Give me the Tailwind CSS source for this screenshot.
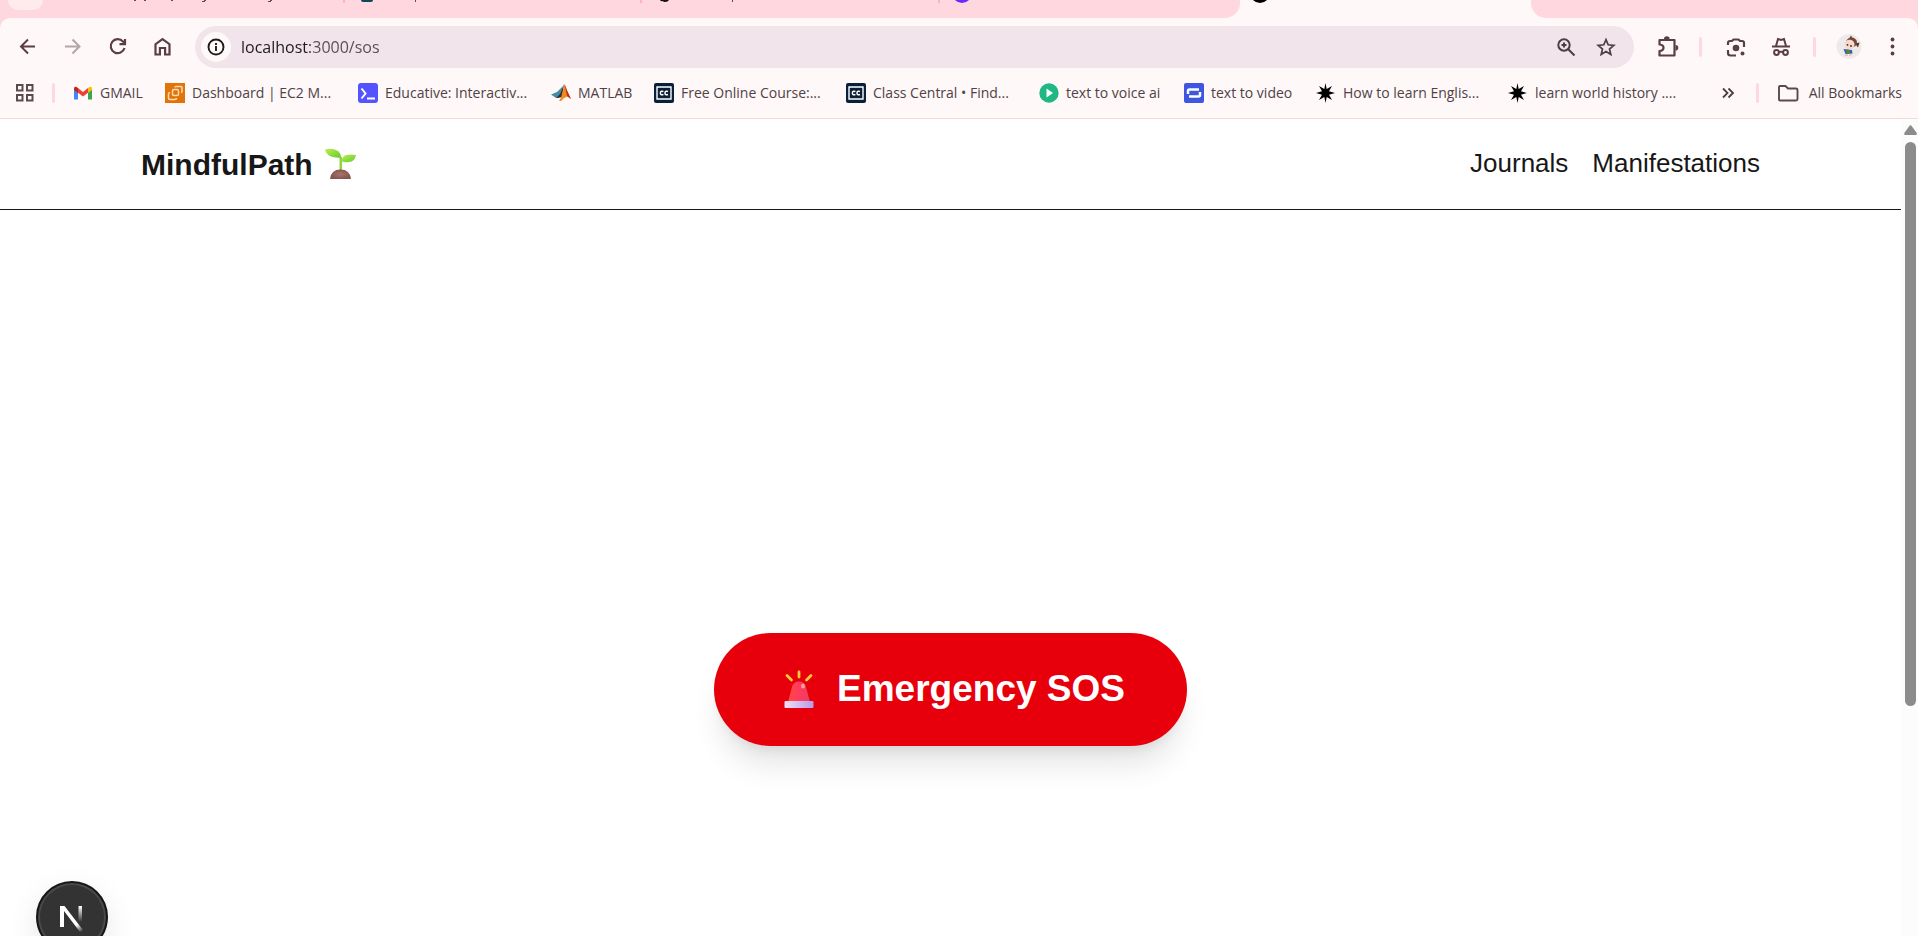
<!DOCTYPE html>
<html lang="en">
<head>
  <meta charset="UTF-8"/>
  <meta name="viewport" content="width=device-width, initial-scale=1.0"/>
  <title>MindfulPath</title>
  <script src="https://cdn.jsdelivr.net/npm/@tailwindcss/browser@4"></script>
</head>
<body class="h-screen flex flex-col overflow-hidden bg-white font-['Liberation_Sans',sans-serif] text-[#171717]">

  <!-- Browser chrome -->
  <header class="shrink-0 bg-[#ffd7df] font-['Open_Sans',sans-serif] text-[#4f4246]">

    <!-- Tab strip, only its lower edge is on screen -->
    <div class="flex h-[18px] bg-[#fff8f8]">
      <div class="flex w-[1240px] shrink-0 rounded-br-[15px] bg-[#ffd7df] pl-2">
        <div class="h-[10px] w-[35px] rounded-b-[12px] bg-[#ffebee]"></div>
        <div class="flex h-[3px] w-[300px] justify-end">
          <svg class="h-[3px] w-[209px]" viewBox="0 0 209 3" fill="#6b4a54">
            <path d="M0 0h2v1h-2zM10 0h2v1h-2zM37 0h2v1h-2zM68 1h2v-1h2v1h-1v1h-3zM134 1h2v-1h2v1h-1v1h-3z"/>
          </svg>
        </div>
        <div class="flex h-[3px] w-[297px] border-l-2 border-[#ffb1c3] pl-4">
          <div class="h-[2px] w-3 rounded-b-[2px] bg-[#0f4658]"></div>
          <div class="ml-[42px] h-[2px] w-px bg-[#6b4a54]"></div>
        </div>
        <div class="flex h-[3px] w-[298px] border-l-2 border-[#ffb1c3] pl-4">
          <svg class="h-[3px] w-3" viewBox="0 0 12 3" fill="#111"><path d="M2 0h9q-1 2-4 2-2 0-2-1-2 1-3-1z"/></svg>
          <div class="ml-[62px] h-[2px] w-px bg-[#6b4a54]"></div>
        </div>
        <div class="h-[3px] border-l-2 border-[#ffb1c3] pl-3">
          <svg class="h-[3px] w-5" viewBox="0 17 20 3" fill="#6a2bff"><circle cx="10" cy="10" r="10"/></svg>
        </div>
      </div>
      <div class="w-[291px] shrink-0 pl-[10px]">
        <svg class="h-[3px] w-5" viewBox="0 17 20 3"><circle cx="10" cy="10" r="10"/></svg>
      </div>
      <div class="flex-1 rounded-bl-[15px] bg-[#ffd7df]"></div>
    </div>

    <!-- Toolbar -->
    <div class="flex h-[58px] items-center rounded-t-[10px] bg-[#fff8f8] pr-3 pl-[15px] text-[#5a3d45]">
      <div class="flex items-center gap-[19px]">
        <button aria-label="Back" class="size-[26px]">
          <svg viewBox="0 0 26 26" fill="none" stroke="currentColor" stroke-width="2"><path d="M20 12.500H7M13 5.500l-7 7 7 7"/></svg>
        </button>
        <button aria-label="Forward" class="size-[26px] text-[#b3a5a8]">
          <svg viewBox="0 0 26 26" fill="none" stroke="currentColor" stroke-width="2"><path d="M5 12.500h14M12.500 5.500l7 7-7 7"/></svg>
        </button>
        <button aria-label="Reload" class="size-[26px]">
          <svg viewBox="0 0 26 26" fill="none" stroke="currentColor" stroke-width="2.200"><path d="M19.500 14A7 7 0 1 1 18 7.500l1.500 1.500M20 5v5.200h-5.500"/></svg>
        </button>
        <button aria-label="Home" class="size-[26px]">
          <svg viewBox="0 0 26 26" fill="none" stroke="currentColor" stroke-width="2.200"><path d="M5.500 20.500V10.200L12.500 5l7 5.200v10.300h-4.400V14H9.900v6.500z"/></svg>
        </button>
      </div>

      <div class="ml-[19px] flex h-[42px] flex-1 items-center rounded-full bg-[#f1e4ea] pr-[18px] pl-[6px]">
        <button aria-label="View site information" class="flex size-[30px] items-center justify-center rounded-full bg-[#fff8f8]">
          <svg class="size-[18px]" viewBox="0 0 18 18" fill="none" stroke="#1f1a1c" stroke-width="1.900"><circle cx="9" cy="9" r="7.500"/><path d="M9 8v5M9 5v1.900"/></svg>
        </button>
        <!-- host is drawn darker than the rest of the address -->
        <input type="text" aria-label="Address" value="localhost:3000/sos" class="ml-[10px] h-[42px] min-w-0 flex-1 bg-[linear-gradient(90deg,#1f1a1c_69px,#5a4a50_69px)] bg-clip-text text-[16px] text-transparent outline-none"/>
        <button aria-label="Zoom" class="size-5 text-[#4b3f43]">
          <svg viewBox="0 0 20 20" fill="none" stroke="currentColor" stroke-width="2"><circle cx="8" cy="8" r="5.700"/><path d="M12 12l6.500 6.500M8 5.500v5M5.500 8h5"/></svg>
        </button>
        <button aria-label="Bookmark this tab" class="ml-5 size-5 text-[#4b3f43]">
          <svg viewBox="0 0 20 20" fill="none" stroke="currentColor" stroke-width="1.700"><path d="M10 2.600l2.200 5.200 5.600.5-4.300 3.700 1.300 5.500L10 14.600l-4.800 2.900 1.300-5.500L2.200 8.300l5.600-.5z"/></svg>
        </button>
      </div>

      <div class="ml-[22px] flex items-center">
        <button aria-label="Extensions" class="size-6">
          <svg viewBox="0 0 24 24" fill="none" stroke="currentColor" stroke-width="2.200"><path d="M3.500 5h15v15.500h-15v-4.500q4-.5 4-3.300t-4-3.200z" stroke-linejoin="round"/><path d="M8 4a2.800 2.800 0 0 1 5.600 0zM19.500 10a2.800 2.800 0 0 1 0 5.600z" fill="currentColor" stroke="none"/></svg>
        </button>
        <div class="ml-[19px] h-5 w-[3px] rounded bg-[#ffd7df]"></div>
        <button aria-label="Search with Lens" class="ml-[22px] size-6">
          <svg viewBox="0 0 24 24" fill="none" stroke="currentColor" stroke-width="2.200"><path d="M4 10V8q0-2 2-2h2l1.500-1.500h5L16 6h2q2 0 2 2v4M4 15v3q0 2.500 2.500 2.500H12"/><circle cx="12" cy="13" r="3.300" fill="currentColor" stroke="none"/><circle cx="18.500" cy="18.500" r="2" fill="currentColor" stroke="none"/></svg>
        </button>
        <button aria-label="Incognito" class="ml-[21px] size-6">
          <svg viewBox="0 0 24 24" fill="none" stroke="currentColor" stroke-width="2"><path d="M3 11.500h18M7 11L9 4l3 1 3-1 2 7M10 17.200q2-1 4 0"/><circle cx="7.500" cy="17.500" r="2.400"/><circle cx="16.500" cy="17.500" r="2.400"/></svg>
        </button>
        <div class="ml-[20px] h-5 w-[3px] rounded bg-[#ffd7df]"></div>
        <button aria-label="Profile" class="ml-5 size-[26px]">
          <svg viewBox="0 0 26 26"><circle cx="13" cy="12.500" r="12.500" fill="#eceaea"/><path d="M13 5l2-3.500 2 4zM19 9.500l4.500-1-1.500 5z" fill="#5b3027"/><ellipse cx="15.500" cy="8.500" rx="5.500" ry="5" fill="#7a4636"/><ellipse cx="13.500" cy="10.500" rx="5" ry="4.800" fill="#f6d9cb"/><circle cx="11.500" cy="10.800" r=".9" fill="#3a2525"/><circle cx="15" cy="12" r=".9" fill="#3a2525"/><path d="M7.500 15l8.500 1 .5 3.500-7 .5z" fill="#2768a8"/><path d="M10.500 15.500l4 1-1.500 3-3-1z" fill="#6d7a2f"/><path d="M9.500 20H12v2H8.500zM13.500 20h2.500l-1 2h-2z" fill="#eec6b2"/></svg>
        </button>
        <button aria-label="Menu" class="ml-[18px] size-[26px]">
          <svg viewBox="0 0 26 26" fill="currentColor"><circle cx="12.500" cy="5.500" r="1.900"/><circle cx="12.500" cy="12.500" r="1.900"/><circle cx="12.500" cy="19.500" r="1.900"/></svg>
        </button>
      </div>
    </div>

    <!-- Bookmarks bar -->
    <nav class="flex h-[43px] items-center border-b border-[#f5d9dd] bg-[#fff8f8] pr-4 pb-[9px] pl-[15px] text-[14px] whitespace-nowrap">
      <button aria-label="Apps" class="size-[19px] shrink-0">
        <svg viewBox="0 0 19 19" fill="none" stroke="#5a4a4e" stroke-width="2"><path d="M2 2h5.500v5.500H2zM12 2h5.500v5.500H12zM2 12h5.500v5.500H2zM12 12h5.500v5.500H12z"/></svg>
      </button>
      <div class="ml-[18px] h-5 w-[3px] shrink-0 rounded bg-[#ffd7df]"></div>

      <div class="ml-[18px] flex items-center">
        <a href="#" class="flex w-[92px] items-center gap-[7px]">
          <svg class="size-5 shrink-0" viewBox="0 0 20 20"><path d="M1 6v10.500h4V9z" fill="#4285f4"/><path d="M15 9v7.500h4V6z" fill="#34a853"/><path d="M5 5l5 4 5-4v4.800L10 13.500 5 9.800z" fill="#ea4335"/><path d="M15 5q4-3 4 1v1l-4 3z" fill="#fbbc04"/><path d="M5 5Q1 2 1 6v1l4 3z" fill="#c5221f"/></svg>
          GMAIL
        </a>
        <a href="#" class="flex w-[193px] items-center gap-[7px]">
          <svg class="size-5 shrink-0" viewBox="0 0 20 20"><path d="M0 0h20v20H0z" fill="#e0730a"/><g fill="none" stroke="#ffd9a8" stroke-width="1.500"><rect x="7.500" y="6.500" width="6" height="6" rx="1.500"/><path d="M10 4.500q0-1 1-1h5q1 0 1 1v4q0 1-1 1M11.500 15q0 1.500-1.500 1.500H5q-1.500 0-1.500-1.500v-4Q3.500 9.500 5 9.500"/></g></svg>
          Dashboard | EC2 M...
        </a>
        <a href="#" class="flex w-[193px] items-center gap-[7px]">
          <svg class="size-5 shrink-0" viewBox="0 0 20 20"><rect width="20" height="20" rx="3" fill="#5553ff"/><path d="M3.500 5.500L7.500 10.500 3.500 15.500M9 15.500h8" fill="none" stroke="#fff" stroke-width="2"/></svg>
          Educative: Interactiv...
        </a>
        <a href="#" class="flex w-[103px] items-center gap-[7px]">
          <svg class="size-5 shrink-0" viewBox="0 0 20 20"><path d="M0 11.500L6 9l6-6-3 9-4 3z" fill="#3f8fa8"/><path d="M5 15l4-4 4-10-2 13-4 1z" fill="#3a2a30"/><path d="M8 18q2-2 3-7l2.500-10Q16 8 20 16l-4-2.500Q12 15 10 18z" fill="#f08a1d"/><path d="M13.500 1Q16 8 20 16l-4-3z" fill="#b5321c"/></svg>
          MATLAB
        </a>
        <a href="#" class="flex w-[192px] items-center gap-[7px]">
          <svg class="size-5 shrink-0" viewBox="0 0 20 20"><rect width="20" height="20" rx="2" fill="#0b1f38"/><path d="M3 4h14v12H3z" fill="none" stroke="#fff" stroke-width="1.400"/><path d="M9.400 8.500q-3-1-3 1.500t3 1.500M14 8.500q-3-1-3 1.500t3 1.500" fill="none" stroke="#fff" stroke-width="1.500"/></svg>
          Free Online Course:...
        </a>
        <a href="#" class="flex w-[193px] items-center gap-[7px]">
          <svg class="size-5 shrink-0" viewBox="0 0 20 20"><rect width="20" height="20" rx="2" fill="#0b1f38"/><path d="M3 4h14v12H3z" fill="none" stroke="#fff" stroke-width="1.400"/><path d="M9.400 8.500q-3-1-3 1.500t3 1.500M14 8.500q-3-1-3 1.500t3 1.500" fill="none" stroke="#fff" stroke-width="1.500"/></svg>
          Class Central • Find...
        </a>
        <a href="#" class="flex w-[145px] items-center gap-[7px]">
          <svg class="size-5 shrink-0" viewBox="0 0 20 20"><circle cx="10" cy="10" r="9.700" fill="#1fb885"/><path d="M7.500 5.500v9l6.500-4.500z" fill="#fff"/></svg>
          text to voice ai
        </a>
        <a href="#" class="flex w-[132px] items-center gap-[7px]">
          <svg class="size-5 shrink-0" viewBox="0 0 20 20"><rect width="20" height="20" rx="2" fill="#3f57e0"/><path d="M4 11V8q0-1.500 1.500-1.500H15M16 9v3q0 1.500-1.500 1.500H5" fill="none" stroke="#fff" stroke-width="2.500"/></svg>
          text to video
        </a>
        <a href="#" class="flex w-[192px] items-center gap-[7px]">
          <svg class="size-5 shrink-0" viewBox="0 0 20 20" fill="#000"><path d="M9.500 0l1.200 6L16 3l-3 5.300 6 1.700-6 1.700 3 5.300-5.300-3L9.500 20l-1.200-6L3 17l3-5.300L0 10l6-1.700L3 3l5.300 3z"/></svg>
          How to learn Englis...
        </a>
        <a href="#" class="flex items-center gap-[7px]">
          <svg class="size-5 shrink-0" viewBox="0 0 20 20" fill="#000"><path d="M9.500 0l1.200 6L16 3l-3 5.300 6 1.700-6 1.700 3 5.300-5.300-3L9.500 20l-1.200-6L3 17l3-5.300L0 10l6-1.700L3 3l5.300 3z"/></svg>
          learn world history ....
        </a>
      </div>

      <div class="ml-auto flex items-center">
        <button aria-label="More bookmarks" class="size-[14px]">
          <svg viewBox="0 0 14 14" fill="none" stroke="#4b3f43" stroke-width="1.800"><path d="M2 2.500l4.500 4.500L2 11.500M7.500 2.500L12 7l-4.500 4.500"/></svg>
        </button>
        <div class="ml-[21px] h-5 w-[3px] rounded bg-[#ffd7df]"></div>
        <a href="#" class="ml-[18px] flex items-center gap-[10px]">
          <svg class="size-[22px]" viewBox="0 0 22 22" fill="none" stroke="#5a4a4e" stroke-width="1.900" stroke-linejoin="round"><path d="M2 17.500V5q0-1 1-1h5.500l2.500 2.500h8q1.500 0 1.500 1.500v9q0 1.500-1.500 1.500H3q-1 0-1-1z"/></svg>
          All Bookmarks
        </a>
      </div>
    </nav>
  </header>

  <!-- Page -->
  <div class="flex min-h-0 flex-1">
    <div class="relative flex min-w-0 flex-1 flex-col overflow-hidden">
      <nav class="flex h-[91px] shrink-0 items-center justify-between border-b border-[#171717] px-[141px]">
        <a href="#" class="flex items-center gap-3 text-[30px] font-bold">
          MindfulPath
          <svg class="size-8" viewBox="0 0 32 32">
            <defs>
              <linearGradient id="leaf" x1="0" y1="0" x2="1" y2="1"><stop offset="0" stop-color="#b9f04c"/><stop offset="1" stop-color="#6cc832"/></linearGradient>
              <radialGradient id="soil"><stop offset="0" stop-color="#a9746a"/><stop offset="1" stop-color="#84544f"/></radialGradient>
            </defs>
            <path d="M14.500 23V9h2.500v14z" fill="#8ed63d"/>
            <path d="M0 1.500q6-1.500 11 .5 5 2 5 7.500-6 .5-10-1Q1 6 0 1.500z" fill="url(#leaf)"/>
            <path d="M31 7q-1 5-4.500 6.500-4 1.500-10 0 .5-5.500 5-6.500 4-1 9.500 0z" fill="url(#leaf)"/>
            <path d="M5 31q1-9.500 10.500-9.500T26 31z" fill="url(#soil)"/>
          </svg>
        </a>
        <div class="flex gap-6 pb-[2px] text-[26px]">
          <a href="#">Journals</a>
          <a href="#">Manifestations</a>
        </div>
      </nav>

      <main class="flex h-[958px] shrink-0 items-center justify-center">
        <button class="flex h-[113px] items-center gap-[15px] rounded-full bg-[#e7000b] px-[62px] text-[37px] font-bold text-white shadow-[0_25px_31px_-6px_rgba(0,0,0,0.1),0_10px_13px_-8px_rgba(0,0,0,0.1)]">
          <svg class="h-10 w-[46px]" viewBox="0 0 46 40">
            <defs>
              <linearGradient id="lamp"><stop offset="0" stop-color="#ff4a3f"/><stop offset=".5" stop-color="#ff3a5e"/><stop offset="1" stop-color="#e8405f"/></linearGradient>
              <linearGradient id="base"><stop offset="0" stop-color="#efe0f5"/><stop offset="1" stop-color="#b79ae6"/></linearGradient>
            </defs>
            <path d="M12 33l4-15q1.500-5.500 7-5.500t7 5.500L34 33z" fill="url(#lamp)"/>
            <ellipse cx="27" cy="17" rx="2" ry="2.500" fill="#ff9a9f"/>
            <rect x="8.500" y="32" width="29" height="7" rx="1" fill="url(#base)"/>
            <path d="M23 3v5M11 6.500l4.500 4.500M35 6.500L30.500 11" stroke="#ffc83d" stroke-width="2.800" stroke-linecap="round"/>
          </svg>
          Emergency SOS
        </button>
      </main>

      <!-- Dev tools badge -->
      <button aria-label="Open Next.js Dev Tools" class="absolute -bottom-[17px] left-9 flex size-18 items-center justify-center rounded-full border-2 border-[#171717] bg-[#333] shadow-[inset_0_0_0_2px_#4a4a4a,0_12px_32px_rgba(0,0,0,0.1)]">
        <svg class="size-8" viewBox="0 0 32 32" fill="none">
          <defs>
            <linearGradient id="diag" x1="16" y1="16" x2="26" y2="31" gradientUnits="userSpaceOnUse"><stop offset=".5" stop-color="#fff"/><stop offset="1" stop-color="#fff" stop-opacity="0"/></linearGradient>
            <linearGradient id="bar" x1="0" y1="5" x2="0" y2="21" gradientUnits="userSpaceOnUse"><stop stop-color="#fff"/><stop offset="1" stop-color="#fff" stop-opacity="0"/></linearGradient>
          </defs>
          <path d="M4 26V5h4.500L27 29l-3 2L8 10v16z" fill="url(#diag)"/>
          <path d="M22.500 5h3.500v16h-3.500z" fill="url(#bar)"/>
        </svg>
      </button>
    </div>

    <!-- Scrollbar -->
    <div class="flex w-[17px] shrink-0 flex-col items-center gap-[7px] bg-[#fcfcfc] pt-[6px] pl-[2px]">
      <svg class="h-[10px] w-[13px]" viewBox="0 0 13 10" fill="#8b8b8b"><path d="M5.500.8q1-1 2 0L12.700 8q.5 2-1 2H1.300q-1.500 0-1-2z"/></svg>
      <div class="h-[564px] w-[11px] rounded-full bg-[#8b8b8b]"></div>
    </div>
  </div>

</body>
</html>
